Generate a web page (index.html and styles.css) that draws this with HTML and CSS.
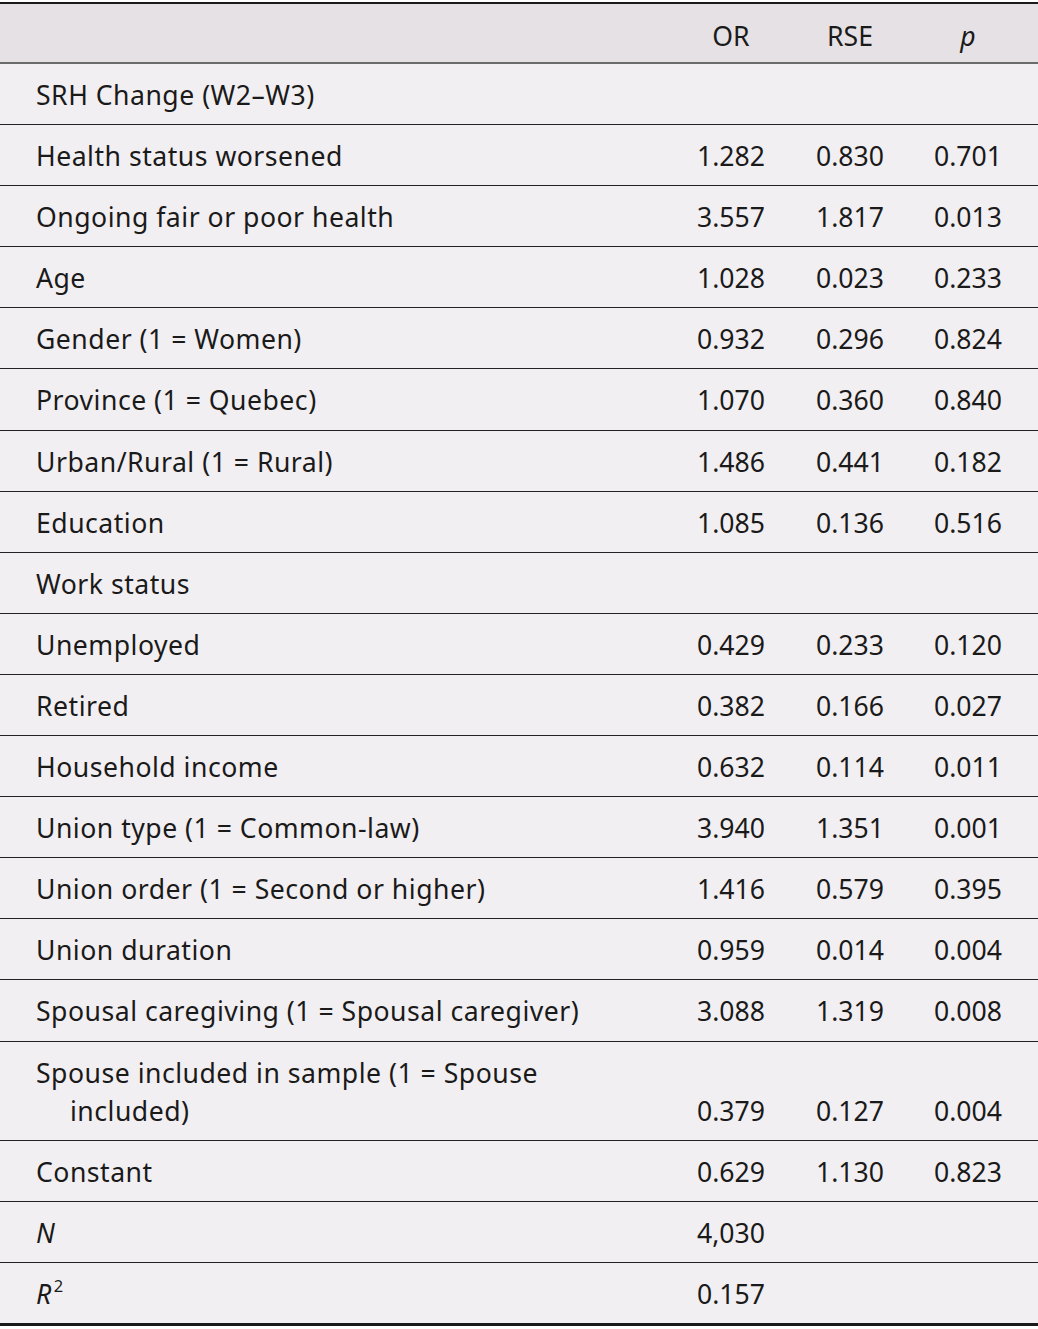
FILE: index.html
```html
<!DOCTYPE html>
<html lang="en">
<head>
    <meta charset="UTF-8">
    <meta name="viewport" content="width=device-width, initial-scale=1.0">
    <title>SRH Change - Logistic Regression</title>
    <link rel="stylesheet" href="styles.css">
</head>
<body>
    <table class="results">
        <colgroup>
            <col class="col-label">
            <col class="col-or">
            <col class="col-rse">
            <col class="col-p">
        </colgroup>
        <thead>
            <tr>
                <th></th>
                <th><span class="head">OR</span></th>
                <th><span class="head">RSE</span></th>
                <th><span class="head"><i>p</i></span></th>
            </tr>
        </thead>
        <tbody>
            <tr><td>SRH Change (W2–W3)</td><td></td><td></td><td></td></tr>
            <tr><td>Health status worsened</td><td>1.282</td><td>0.830</td><td>0.701</td></tr>
            <tr><td>Ongoing fair or poor health</td><td>3.557</td><td>1.817</td><td>0.013</td></tr>
            <tr><td>Age</td><td>1.028</td><td>0.023</td><td>0.233</td></tr>
            <tr><td>Gender (1 = Women)</td><td>0.932</td><td>0.296</td><td>0.824</td></tr>
            <tr><td>Province (1 = Quebec)</td><td>1.070</td><td>0.360</td><td>0.840</td></tr>
            <tr><td>Urban/Rural (1 = Rural)</td><td>1.486</td><td>0.441</td><td>0.182</td></tr>
            <tr><td>Education</td><td>1.085</td><td>0.136</td><td>0.516</td></tr>
            <tr><td>Work status</td><td></td><td></td><td></td></tr>
            <tr><td>Unemployed</td><td>0.429</td><td>0.233</td><td>0.120</td></tr>
            <tr><td>Retired</td><td>0.382</td><td>0.166</td><td>0.027</td></tr>
            <tr><td>Household income</td><td>0.632</td><td>0.114</td><td>0.011</td></tr>
            <tr><td>Union type (1 = Common-law)</td><td>3.940</td><td>1.351</td><td>0.001</td></tr>
            <tr><td>Union order (1 = Second or higher)</td><td>1.416</td><td>0.579</td><td>0.395</td></tr>
            <tr><td>Union duration</td><td>0.959</td><td>0.014</td><td>0.004</td></tr>
            <tr><td>Spousal caregiving (1 = Spousal caregiver)</td><td>3.088</td><td>1.319</td><td>0.008</td></tr>
            <tr><td class="hang">Spouse included in sample (1 = Spouse included)</td><td>0.379</td><td>0.127</td><td>0.004</td></tr>
            <tr><td>Constant</td><td>0.629</td><td>1.130</td><td>0.823</td></tr>
            <tr><td><i>N</i></td><td>4,030</td><td></td><td></td></tr>
            <tr class="last"><td><i>R</i><sup>2</sup></td><td>0.157</td><td></td><td></td></tr>
        </tbody>
    </table>
</body>
</html>
```

FILE: styles.css
```css
* {
    margin: 0;
    padding: 0;
    box-sizing: border-box;
}

body {
    background: #fff;
    color: #1a1a1a;
    font-family: 'Noto Sans', sans-serif;
    font-size: 26.6px;
    padding-top: 2px;
}

.results {
    width: 1038px;
    border-collapse: collapse;
    table-layout: fixed;
    background: #f2eff2;
    border-top: 2px solid #1a1a1a;
    border-bottom: 3px solid #1a1a1a;
}

.col-label { width: 697px; }
.col-or { width: 119px; }
.col-rse { width: 118px; }
.col-p { width: 104px; }

thead th {
    background: #e6e1e4;
    font-weight: normal;
    text-align: left;
    line-height: 38px;
    padding: 13px 0 7px;
    border-bottom: 2px solid #6b6b6b;
}

.head {
    display: inline-block;
    width: 68px;
    text-align: center;
}

td {
    line-height: 38px;
    padding: 12px 0 10.1px;
    vertical-align: bottom;
    border-bottom: 1px solid #222;
}

td:first-child {
    padding-left: 36px;
    letter-spacing: 0.5px;
}

td.hang {
    padding-left: 70px;
    text-indent: -34px;
    padding-right: 120px;
}

.last td {
    border-bottom: none;
}

sup {
    font-size: 0.62em;
    line-height: 0;
    margin-left: 2px;
    vertical-align: 0.7em;
}
```
